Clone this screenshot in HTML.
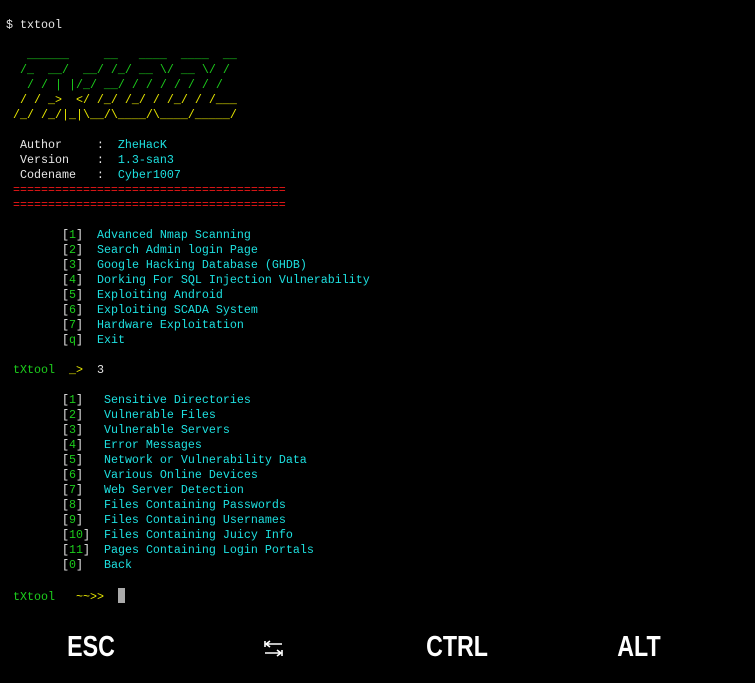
<!DOCTYPE html>
<html><head><meta charset="utf-8"><style>
html,body{margin:0;padding:0;background:#000;width:755px;height:683px;overflow:hidden}
pre{position:absolute;left:6px;top:18px;margin:0;font-family:"Liberation Mono","DejaVu Sans Mono",monospace;font-size:11.67px;line-height:15px;color:#e6e6e6;white-space:pre}
.g{color:#1ccd1c}.y{color:#e6e600}.c{color:#1de0e0}.r{color:#f21818}.w{color:#e6e6e6}
.cur{display:inline-block;width:7px;height:15px;background:#aaa;vertical-align:-3px}
.k{position:absolute;top:630px;color:#fff;font-family:"Liberation Sans",sans-serif;font-size:29px;font-weight:bold;transform:scaleX(0.8);transform-origin:center;width:120px;text-align:center;line-height:34px}
</style></head><body>
<pre>$ txtool

<span class="g">   ______     __   ____  ____  __
  /_  __/  __/ /_/ __ \/ __ \/ /
   / / | |/_/ __/ / / / / / / /</span>
<span class="y">  / / _>  &lt;/ /_/ /_/ / /_/ / /___
 /_/ /_/|_|\__/\____/\____/_____/</span>

  Author     :  <span class="c">ZheHacK</span>
  Version    :  <span class="c">1.3-san3</span>
  Codename   :  <span class="c">Cyber1007</span>
<span class="r"> =======================================</span>
<span class="r"> =======================================</span>

        [<span class="g">1</span>]  <span class="c">Advanced Nmap Scanning</span>
        [<span class="g">2</span>]  <span class="c">Search Admin login Page</span>
        [<span class="g">3</span>]  <span class="c">Google Hacking Database (GHDB)</span>
        [<span class="g">4</span>]  <span class="c">Dorking For SQL Injection Vulnerability</span>
        [<span class="g">5</span>]  <span class="c">Exploiting Android</span>
        [<span class="g">6</span>]  <span class="c">Exploiting SCADA System</span>
        [<span class="g">7</span>]  <span class="c">Hardware Exploitation</span>
        [<span class="g">q</span>]  <span class="c">Exit</span>

 <span class="g">tXtool</span>  <span class="y">_></span>  3

        [<span class="g">1</span>]   <span class="c">Sensitive Directories</span>
        [<span class="g">2</span>]   <span class="c">Vulnerable Files</span>
        [<span class="g">3</span>]   <span class="c">Vulnerable Servers</span>
        [<span class="g">4</span>]   <span class="c">Error Messages</span>
        [<span class="g">5</span>]   <span class="c">Network or Vulnerability Data</span>
        [<span class="g">6</span>]   <span class="c">Various Online Devices</span>
        [<span class="g">7</span>]   <span class="c">Web Server Detection</span>
        [<span class="g">8</span>]   <span class="c">Files Containing Passwords</span>
        [<span class="g">9</span>]   <span class="c">Files Containing Usernames</span>
        [<span class="g">10</span>]  <span class="c">Files Containing Juicy Info</span>
        [<span class="g">11</span>]  <span class="c">Pages Containing Login Portals</span>
        [<span class="g">0</span>]   <span class="c">Back</span>

 <span class="g">tXtool</span>   <span class="y">~~>></span>  <span class="cur"></span></pre>
<div class="k" style="left:31px">ESC</div>
<svg style="position:absolute;left:264px;top:640px" width="19" height="17" viewBox="0 0 19 17" fill="none" stroke="#fff" stroke-width="1.6">
<path d="M1 1v6M2 4h16M2 4l4-3M2 4l4 3"/>
<path d="M18 10v6M1 13h16M17 13l-4-3M17 13l-4 3"/>
</svg>
<div class="k" style="left:397px">CTRL</div>
<div class="k" style="left:579px">ALT</div>
</body></html>
